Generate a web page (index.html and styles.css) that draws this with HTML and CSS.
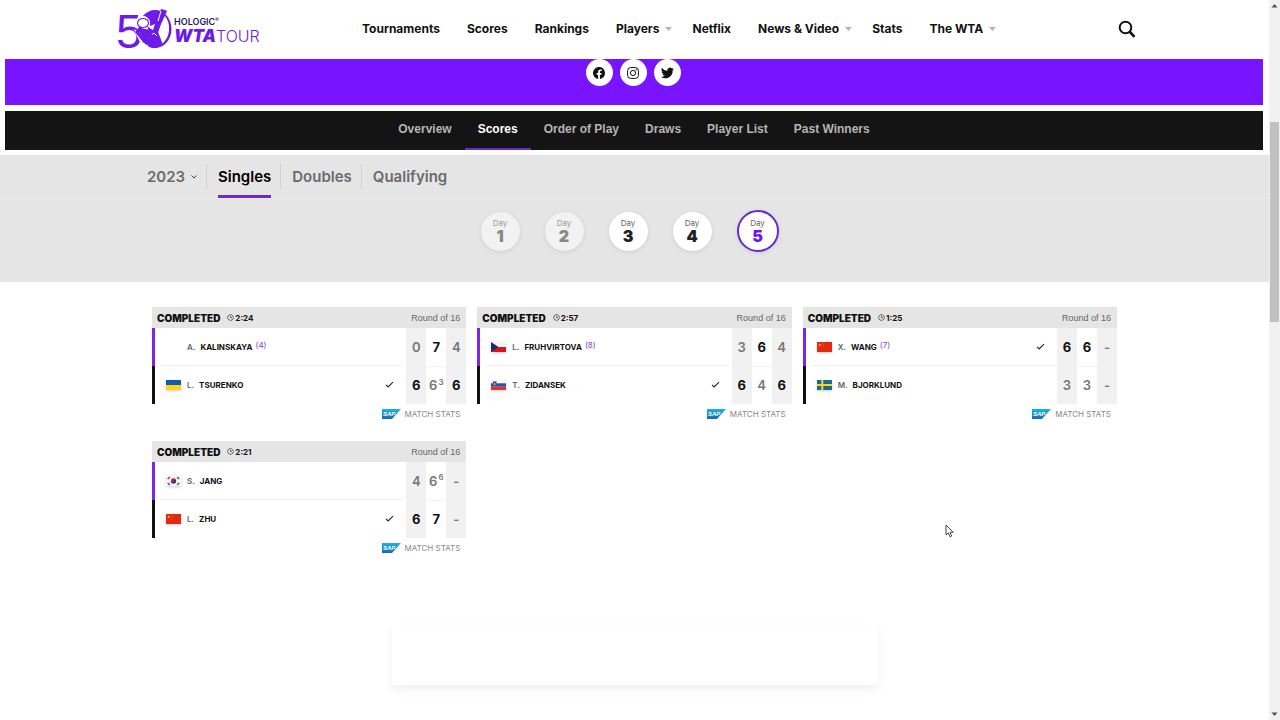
FILE: index.html
```html
<!DOCTYPE html>
<html lang="en">
<head>
<meta charset="utf-8">
<title>Scores | WTA Tour</title>
<link rel="stylesheet" href="styles.css">
</head>
<body>
<svg class="defs" width="0" height="0" aria-hidden="true">
  <defs>
    <linearGradient id="sapfill" x1="0" y1="0" x2="0" y2="1"><stop offset="0" stop-color="#1cb5e2"/><stop offset="1" stop-color="#1668b4"/></linearGradient>
    <symbol id="sap" viewBox="0 0 19 10"><path d="M0 0H19L10 10H0Z" fill="url(#sapfill)"/><text x="1" y="7" class="sap-text">SAP</text></symbol>
    <symbol id="clock" viewBox="0 0 8 8"><path d="M4 .7a3.3 3.3 0 1 0 .01 0zM4 2v2.2h1.8" fill="none" stroke="#333" stroke-width=".8"/></symbol>
    <symbol id="check" viewBox="0 0 10 8"><path d="M1 4.4 3.4 6.8 9 1.2" fill="none" stroke="#222" stroke-width="1.2"/></symbol>
    <symbol id="caret" viewBox="0 0 7 4"><path d="M0 0H7L3.5 4Z" fill="#b5b5b5"/></symbol>
    <symbol id="ua" viewBox="0 0 15 10"><path d="M0 0H15V5H0Z" fill="#0d5eaf"/><path d="M0 5H15V10H0Z" fill="#fdd51c"/></symbol>
    <symbol id="cz" viewBox="0 0 15 10"><path d="M0 0H15V5H0Z" fill="#f5f5f5"/><path d="M0 5H15V10H0Z" fill="#d8141f"/><path d="M0 0 7.5 5 0 10Z" fill="#17306e"/></symbol>
    <symbol id="si" viewBox="0 0 15 10"><path d="M0 0H15V3.4H0Z" fill="#f5f5f5"/><path d="M0 3.3H15V6.7H0Z" fill="#1b57a5"/><path d="M0 6.6H15V10H0Z" fill="#e1312f"/><path d="M2 1.5H5.4V4Q5 5.4 3.7 6 2.4 5.4 2 4Z" fill="#1b57a5" stroke="#d55" stroke-width=".4"/><path d="M2.6 4.6 3.7 3 4.8 4.6Z" fill="#fff"/></symbol>
    <symbol id="cn" viewBox="0 0 15 10"><path d="M0 0H15V10H0Z" fill="#e02a14"/><path d="M2.8 1.2 3.2 2.3H4.3L3.4 3 3.8 4.1 2.8 3.4 1.8 4.1 2.2 3 1.3 2.3H2.4Z" fill="#fbc21c"/><path d="M5.2 1h.6v.6h-.6zM6 2.2h.6v.6H6zM6 3.6h.6v.6H6zM5.2 4.8h.6v.6h-.6z" fill="#f59a1c"/></symbol>
    <symbol id="se" viewBox="0 0 15 10"><path d="M0 0H15V10H0Z" fill="#17689b"/><path d="M4.3 0H6.3V10H4.3ZM0 4H15V6H0Z" fill="#fdd51c"/></symbol>
    <symbol id="kr" viewBox="0 0 15 10"><path d="M0 0H15V10H0Z" fill="#fafafa"/><path d="M4.8 5a2.7 2.7 0 0 1 5.4 0z" fill="#c8293c"/><path d="M4.8 5a2.7 2.7 0 0 0 5.4 0z" fill="#1f3f83"/><path d="M4.8 5a1.35 1.35 0 0 0 2.7 0z" fill="#c8293c"/><path d="M7.5 5a1.35 1.35 0 0 1 2.7 0z" fill="#1f3f83"/><path d="M1.6 2.9 3.2.7M2.4 3.4 4 1.2M11 1.2 12.6 3.4M11.8.7 13.4 2.9M1.6 7.1 3.2 9.3M2.4 6.6 4 8.8M11 8.8 12.6 6.6M11.8 9.3 13.4 7.1" stroke="#222" stroke-width=".8"/></symbol>
  </defs>
</svg>

<div class="page">
  <header class="site-header">
    <a class="logo" href="#" aria-label="Hologic WTA Tour">
      <svg width="144" height="40" viewBox="0 0 144 40">
        <text x="-1" y="39" class="logo-five">5</text>
        <path d="M23 0H38V40H31Q23 37 21 26L19 14Z" fill="#fff"/>
        <ellipse cx="38" cy="20" rx="16.500" ry="19" fill="#6d1ce8"/>
        <path d="M47 6Q53 12 52 22 51 30 45 35 44 29 41 24L43 18Z" fill="#fff"/>
        <path d="M17 20 22 23 31 37 27 38Q22 33 20 27Z" fill="#fff"/>
        <path d="M44 0 48 1 50 2 45 13 40 20 42 26 46 36Q39 41 32 38L35 31 29 36 24 30 30 23 34 18 38 15Z" fill="#6d1ce8"/>
        <path d="M44 2 41 12M32 28 37 24 40 27" fill="none" stroke="#fff" stroke-width="1"/>
        <path d="M23 8Q29 5 33 12L33 17 38 15 36 21 28 20 20 18Z" fill="#fff"/>
        <ellipse cx="26" cy="14" rx="5.500" ry="4.500" fill="#fff" stroke="#6d1ce8" stroke-width="1.200"/>
        <path d="M30 17 37 22 32 22Z" fill="#6d1ce8"/>
        <path d="M24 18 20 23 27 32 35 26" fill="none" stroke="#6d1ce8" stroke-width="3"/>
        <text x="57" y="16" class="logo-hologic">HOLOGIC</text>
        <circle cx="100" cy="10" r="1.200" fill="none" stroke="#2d1b57" stroke-width=".7"/>
        <text x="57" y="33" class="logo-wta">WTA</text>
        <text x="99" y="33" class="logo-tour">TOUR</text>
      </svg>
    </a>
    <nav class="main-nav" aria-label="Main">
      <a href="#">Tournaments</a>
      <a href="#">Scores</a>
      <a href="#">Rankings</a>
      <a class="has-menu" href="#">Players <svg width="7" height="4"><use href="#caret"/></svg></a>
      <a href="#">Netflix</a>
      <a class="has-menu" href="#">News &amp; Video <svg width="7" height="4"><use href="#caret"/></svg></a>
      <a href="#">Stats</a>
      <a class="has-menu" href="#">The WTA <svg width="7" height="4"><use href="#caret"/></svg></a>
    </nav>
    <button class="search" type="button" aria-label="Search">
      <svg width="18" height="18" viewBox="0 0 18 18"><circle cx="7.500" cy="7.500" r="5.800" fill="none" stroke="#111" stroke-width="2"/><path d="M11.500 11.500 16.500 16.800" stroke="#111" stroke-width="2.600"/></svg>
    </button>
  </header>

  <div class="banner">
    <a href="#" aria-label="Facebook"><svg width="12" height="12" viewBox="0 0 12 12"><path d="M12 6A6 6 0 1 0 5.100 11.900V7.700H3.600V6H5.100V4.700Q5.100 2.400 7.300 2.400L8.700 2.500V4H7.900Q6.900 4 6.900 4.900V6H8.600L8.300 7.700H6.900V11.900A6 6 0 0 0 12 6Z" fill="#111"/></svg></a>
    <a href="#" aria-label="Instagram"><svg width="12" height="12" viewBox="0 0 12 12" fill="none" stroke="#111"><rect x=".6" y=".6" width="10.800" height="10.800" rx="3"/><circle cx="6" cy="6" r="2.600"/><circle cx="9.100" cy="2.900" r=".3"/></svg></a>
    <a href="#" aria-label="Twitter"><svg width="13" height="12" viewBox="0 0 24 20"><path d="M24 2.400Q22.600 3 21.200 3.100 22.700 2.200 23.300.4 21.900 1.300 20.200 1.600A4.900 4.900 0 0 0 11.800 6.100Q5.500 5.800 1.700.9A4.900 4.900 0 0 0 3.200 7.500Q2 7.400 1 6.900A4.900 4.900 0 0 0 4.900 11.700Q3.800 12 2.700 11.800A4.900 4.900 0 0 0 7.300 15.200Q4.300 17.500 0 17.200C10 23.500 22 17 21.500 5Q23 4 24 2.400Z" fill="#111"/></svg></a>
  </div>

  <nav class="sub-nav" aria-label="Tournament">
    <a href="#">Overview</a>
    <a class="active" href="#">Scores</a>
    <a href="#">Order of Play</a>
    <a href="#">Draws</a>
    <a href="#">Player List</a>
    <a href="#">Past Winners</a>
  </nav>

  <section class="filters">
    <div class="tabs">
      <div class="year">
        <select aria-label="Year"><option>2023</option></select>
        <svg width="6" height="4" viewBox="0 0 6 4"><path d="M.5.5 3 3 5.500.5" fill="none" stroke="#444"/></svg>
      </div>
      <button class="tab active" type="button">Singles</button>
      <button class="tab" type="button">Doubles</button>
      <button class="tab" type="button">Qualifying</button>
    </div>
    <div class="days">
      <button class="day past" type="button">Day<b>1</b></button>
      <button class="day past" type="button">Day<b>2</b></button>
      <button class="day" type="button">Day<b>3</b></button>
      <button class="day" type="button">Day<b>4</b></button>
      <button class="day current" type="button">Day<b>5</b></button>
    </div>
  </section>

  <main class="matches">
    <article class="match">
      <header><h2>COMPLETED</h2><svg width="7" height="7"><use href="#clock"/></svg><time>2:24</time><span class="round">Round of 16</span></header>
      <table>
        <tr><th scope="row"><div class="player"><span class="flag"></span><i>A.</i><b>KALINSKAYA</b><small>(4)</small></div></th><td>0</td><td class="won">7</td><td>4</td></tr>
        <tr><th scope="row"><div class="player"><svg class="flag"><use href="#ua"/></svg><i>L.</i><b>TSURENKO</b><svg class="check"><use href="#check"/></svg></div></th><td class="won">6</td><td>6<sup>3</sup></td><td class="won">6</td></tr>
      </table>
      <a class="stats" href="#"><svg width="19" height="10"><use href="#sap"/></svg>MATCH STATS</a>
    </article>
    <article class="match">
      <header><h2>COMPLETED</h2><svg width="7" height="7"><use href="#clock"/></svg><time>2:57</time><span class="round">Round of 16</span></header>
      <table>
        <tr><th scope="row"><div class="player"><svg class="flag"><use href="#cz"/></svg><i>L.</i><b>FRUHVIRTOVA</b><small>(8)</small></div></th><td>3</td><td class="won">6</td><td>4</td></tr>
        <tr><th scope="row"><div class="player"><svg class="flag"><use href="#si"/></svg><i>T.</i><b>ZIDANSEK</b><svg class="check"><use href="#check"/></svg></div></th><td class="won">6</td><td>4</td><td class="won">6</td></tr>
      </table>
      <a class="stats" href="#"><svg width="19" height="10"><use href="#sap"/></svg>MATCH STATS</a>
    </article>
    <article class="match">
      <header><h2>COMPLETED</h2><svg width="7" height="7"><use href="#clock"/></svg><time>1:25</time><span class="round">Round of 16</span></header>
      <table>
        <tr><th scope="row"><div class="player"><svg class="flag"><use href="#cn"/></svg><i>X.</i><b>WANG</b><small>(7)</small><svg class="check"><use href="#check"/></svg></div></th><td class="won">6</td><td class="won">6</td><td>-</td></tr>
        <tr><th scope="row"><div class="player"><svg class="flag"><use href="#se"/></svg><i>M.</i><b>BJORKLUND</b></div></th><td>3</td><td>3</td><td>-</td></tr>
      </table>
      <a class="stats" href="#"><svg width="19" height="10"><use href="#sap"/></svg>MATCH STATS</a>
    </article>
    <article class="match">
      <header><h2>COMPLETED</h2><svg width="7" height="7"><use href="#clock"/></svg><time>2:21</time><span class="round">Round of 16</span></header>
      <table>
        <tr><th scope="row"><div class="player"><svg class="flag"><use href="#kr"/></svg><i>S.</i><b>JANG</b></div></th><td>4</td><td>6<sup>6</sup></td><td>-</td></tr>
        <tr><th scope="row"><div class="player"><svg class="flag"><use href="#cn"/></svg><i>L.</i><b>ZHU</b><svg class="check"><use href="#check"/></svg></div></th><td class="won">6</td><td class="won">7</td><td>-</td></tr>
      </table>
      <a class="stats" href="#"><svg width="19" height="10"><use href="#sap"/></svg>MATCH STATS</a>
    </article>
  </main>

  <div class="panel"></div>
</div>

<div class="scrollbar" aria-hidden="true">
  <svg width="11" height="12" viewBox="0 0 11 12"><path d="M2.500 7.500H8.500L5.500 4Z" fill="#555"/></svg>
  <span class="thumb"></span>
  <svg width="11" height="12" viewBox="0 0 11 12"><path d="M2.500 4.500H8.500L5.500 8Z" fill="#555"/></svg>
</div>

<svg class="pointer" width="9" height="14" viewBox="0 0 9 14" aria-hidden="true"><path d="M1 1V11L3.300 8.900 5 12.800 6.700 12 5 8.300H8.200Z" fill="#fff" stroke="#333" stroke-width=".9"/></svg>
</body>
</html>
```

FILE: styles.css
```css
* { box-sizing: border-box; }

body {
  margin: 0;
  display: flex;
  min-height: 100vh;
  background: #fff;
  color: #111;
  font-family: Inter, "Liberation Sans", sans-serif;
}

a { color: inherit; text-decoration: none; }
button { border: 0; background: none; font: inherit; color: inherit; padding: 0; }
.defs { position: absolute; }

.page { flex: 1; min-width: 0; }

/* Header */
.site-header {
  display: grid;
  grid-template-columns: 245px 1fr 151px;
  height: 58px;
  padding-left: 117px;
  align-items: center;
}
.logo svg { display: block; overflow: visible; }
.logo-five { font: 400 48px "Liberation Sans", sans-serif; fill: #6d1ce8; }
.logo-hologic { font: 600 9px Inter, sans-serif; fill: #2d1b57; }
.logo-wta { font: italic 900 17px Inter, sans-serif; fill: #6d1ce8; }
.logo-tour { font: 300 16px Inter, sans-serif; fill: #6d1ce8; }

.main-nav {
  display: flex;
  gap: 27px;
  font-size: 12px;
  font-weight: 700;
  line-height: 16px;
  white-space: nowrap;
}
.has-menu { display: flex; align-items: center; gap: 6px; margin-right: -7px; }
.search { width: 18px; height: 18px; }
.search svg { display: block; }

/* Social banner */
.banner {
  display: flex;
  justify-content: center;
  gap: 7px;
  height: 46px;
  margin: 1px 6px 6px 5px;
  padding-right: 2px;
  background: #7814ff;
}
.banner a {
  display: flex;
  align-items: center;
  justify-content: center;
  width: 27px;
  height: 27px;
  border-radius: 50%;
  background: #fff;
}

/* Tournament navigation */
.sub-nav {
  display: flex;
  justify-content: center;
  height: 39px;
  margin: 0 6px 5px 5px;
  background: #141414;
  color: #b5b5b5;
  font-family: "Liberation Sans", sans-serif;
  font-size: 12px;
  font-weight: 700;
  line-height: 37px;
}
.sub-nav a { padding: 0 13px; border-bottom: 2px solid transparent; }
.sub-nav .active { color: #fff; border-color: #6a2bc9; }

/* Filters */
.filters { height: 127px; background: #e5e5e5; }
.tabs {
  display: flex;
  align-items: flex-start;
  height: 44px;
  padding-left: 147px;
  border-bottom: 1px solid #ededed;
  color: #6b6b6b;
  font-size: 15px;
  font-weight: 600;
}
.year { display: flex; align-items: center; gap: 5px; height: 43px; padding-right: 10px; }
.year select {
  appearance: none;
  border: 0;
  padding: 0;
  background: none;
  color: inherit;
  font: inherit;
}
.tab {
  position: relative;
  height: 43px;
  margin: 0 10px 0 11px;
  border-bottom: 3px solid transparent;
  border-top: 3px solid transparent;
}
.tab::before {
  content: "";
  position: absolute;
  left: -12px;
  top: 6px;
  width: 1px;
  height: 25px;
  background: #d2d2d2;
}
.tab.active { color: #000; border-bottom-color: #6a2bc9; }

.days {
  display: flex;
  justify-content: center;
  align-items: center;
  gap: 25px;
  height: 64px;
  padding-right: 10px;
}
.day {
  width: 39px;
  height: 39px;
  border-radius: 50%;
  background: #fff;
  box-shadow: 0 1px 4px rgba(0, 0, 0, .1);
  color: #666;
  font-size: 8px;
  line-height: 10px;
}
.day b { display: block; color: #222; font-size: 16px; font-weight: 900; line-height: 16px; }
.day.past { background: #f2f2f2; color: #999; }
.day.past b { color: #888; }
.day.current { width: 42px; height: 42px; border: 2px solid #6a2bc9; }
.day.current b { color: #6d14ee; }

/* Match cards */
.matches {
  display: grid;
  grid-template-columns: repeat(3, 1fr);
  gap: 17px 11px;
  max-width: 965px;
  margin: 25px auto 0;
}
.match header {
  display: flex;
  align-items: center;
  height: 21px;
  padding: 0 6px 0 5px;
  background: #e5e5e5;
}
.match h2 { margin: 0 7px 0 0; font-size: 10px; font-weight: 900; }
.match time { margin-left: 1px; font-size: 8px; font-weight: 700; }
.round { margin-left: auto; color: #666; font: 9px "Liberation Sans", sans-serif; }

.match table { width: 100%; border-collapse: collapse; table-layout: fixed; }
.match tr { height: 38px; }
.match th { padding: 0 0 0 9px; box-shadow: inset 3px 0 #7a28e6; }
.match tr + tr th { box-shadow: inset 3px 0 #111; }
.match td {
  width: 20px;
  padding: 0;
  color: #777;
  font-size: 13px;
  font-weight: 600;
  text-align: center;
  white-space: nowrap;
}
.match td:nth-child(even), .match td:last-child { background: #f1f1f1; }
.match td:nth-child(3) { background: none; }
.match tr:first-child td:nth-child(3) { border-bottom: 1px solid #f1f1f1; }
.match .won { color: #111; font-weight: 700; }
.match sup { font-size: 8px; line-height: 8px; margin-left: 1px; }

.player {
  display: flex;
  align-items: center;
  height: 38px;
  margin-right: 3px;
  padding: 0 9px 0 5px;
  border-bottom: 1px solid #eee;
  font-size: 8px;
}
tr + tr .player { border-color: transparent; }
.flag {
  width: 15px;
  height: 10px;
  margin-right: 6px;
}
svg.flag { box-shadow: 0 1px 3px rgba(0, 0, 0, .2); }
.player i { margin-right: 5px; color: #666; font-style: normal; font-weight: 600; }
.player b { font-weight: 700; }
.player small { margin: 0 0 3px 3px; color: #7a3fe0; font-size: 8px; font-weight: 400; }
.check { width: 9px; height: 7px; margin-left: auto; }

.stats {
  display: flex;
  align-items: center;
  justify-content: flex-end;
  gap: 4px;
  height: 20px;
  padding-right: 6px;
  color: #888;
  font-size: 8px;
}
.sap-text { font: italic 700 6px "Liberation Sans", sans-serif; fill: #fff; }

/* Empty content panel */
.panel {
  width: 486px;
  height: 60px;
  margin: 67px auto 0;
  background: #fff;
  box-shadow: 0 5px 10px rgba(0, 0, 0, .06);
}

/* Scroll bar */
.scrollbar {
  display: flex;
  flex-direction: column;
  justify-content: space-between;
  width: 11px;
  background: #f1f1f1;
}
.thumb { height: 200px; margin: 110px 1px auto; background: #c1c1c1; }

.pointer { position: absolute; left: 945px; top: 524px; }
```
